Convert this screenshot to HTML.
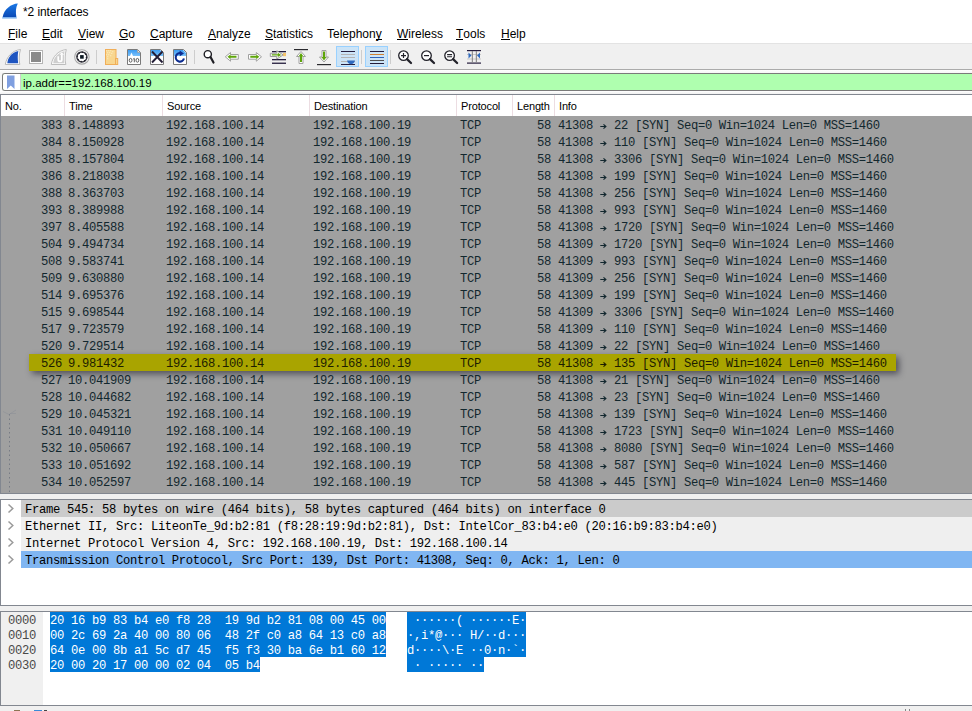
<!DOCTYPE html>
<html><head><meta charset="utf-8">
<style>
*{margin:0;padding:0;box-sizing:border-box}
html,body{width:972px;height:711px;overflow:hidden;background:#f0f0f0;font-family:"Liberation Sans",sans-serif;font-size:12px;color:#000;position:relative}
.abs{position:absolute}
#title{position:absolute;left:0;top:0;width:972px;height:22px;background:#fff}
#menu{position:absolute;left:0;top:22px;width:972px;height:22px;background:#fff}
.mi{position:absolute;top:5px;font-size:12px;line-height:14px;white-space:nowrap}
.mi u{text-decoration:none;position:relative}.mi u::after{content:"";position:absolute;left:0;right:0;top:12px;height:1px;background:#000}
#tb{position:absolute;left:0;top:43px;width:972px;height:27px;background:#f0f0f0;border-top:1px solid #e3e3e3;border-bottom:1px solid #ababab}
#tb svg{position:absolute}
#filter{position:absolute;left:2px;top:73px;width:970px;height:18px;border:1px solid #7a7a7a;border-right:none;border-radius:3px 0 0 3px;background:#afffaf;overflow:hidden}
#fbtn{position:absolute;left:0;top:0;width:18px;height:16px;background:#fff;border-right:1px solid #cfcfcf}
#pl{position:absolute;left:0;top:94px;width:972px;height:400px;border-top:1px solid #828790;border-left:1px solid #828790;border-bottom:1px solid #828790;background:#a0a0a0;overflow:hidden}
#hdr{position:absolute;left:0;top:0;width:971px;height:21px;background:#fff}
.hs{position:absolute;top:0;width:1px;height:21px;background:#ecdde2}
.ht{position:absolute;top:4px;font-size:11px;letter-spacing:-0.15px;line-height:14px}
.r{position:absolute;left:1px;width:971px;height:17px;color:#12272e;font-family:"Liberation Mono",monospace;font-size:12.2px;letter-spacing:-0.32px;line-height:17px;white-space:pre}
.r .c{position:absolute;top:2px}
.arw{vertical-align:-0.5px}
.hl{left:29px;width:867px;background:#a9a400;color:#1d1d00;box-shadow:3px 3px 6px rgba(30,30,45,0.6)}
.hl .c{margin-left:-28px}
#split1{position:absolute;left:0;top:494px;width:972px;height:5px;background:#f0f0f0}
#det{position:absolute;left:0;top:499px;width:972px;height:107px;border-top:1px solid #828790;border-left:1px solid #828790;border-bottom:1px solid #828790;background:#fff;overflow:hidden}
.dr{position:absolute;left:20px;width:952px;height:17px;font-family:"Liberation Mono",monospace;font-size:12.2px;letter-spacing:-0.32px;line-height:17px;white-space:pre;color:#000}
.dr span{position:absolute;left:4px;top:2px}
.chev{position:absolute;left:6px;top:0}
#bytes{position:absolute;left:0;top:611px;width:972px;height:95px;border-top:1px solid #828790;border-left:1px solid #828790;border-bottom:1px solid #828790;background:#fff;overflow:hidden}
#offcol{position:absolute;left:0;top:0;width:42px;height:100px;background:#f0f0f0}
.br{position:absolute;height:15px;font-family:"Liberation Mono",monospace;font-size:12.2px;letter-spacing:-0.32px;line-height:15px;white-space:pre}
.br span{position:absolute;left:0;top:2px}
.off{left:7px;color:#4a4a4a;padding-top:2px}
.sel{background:#0078d7;color:#fff}
#status{position:absolute;left:0;top:706px;width:972px;height:5px;background:#f0f0f0;overflow:hidden}
.mono-st{-webkit-text-stroke:0.2px currentColor}

#fbg{position:absolute;left:0;top:70px;width:972px;height:24px;background:linear-gradient(#fff 0,#f6f6f6 3px,#f6f6f6 20px,#fff 21px,#f0f0f0 24px)}

</style></head><body>
<div id="title">
 <svg class="abs" style="left:0;top:0" width="22" height="22" viewBox="0 0 22 22">
  <defs><linearGradient id="sg" x1="0" y1="0" x2="0" y2="1"><stop offset="0" stop-color="#1a78e6"/><stop offset="1" stop-color="#0b4ab6"/></linearGradient></defs>
  <path d="M17.8 3.6 C11 4 4.3 9 2.6 17.2 L16.4 17.2 C15.6 12.5 15.6 7.6 17.8 3.6Z" fill="url(#sg)"/>
  <path d="M2.4 17.2 H16.6 L16.9 18.6 H2.1Z" fill="#6aa8ee"/>
 </svg>
 <div class="abs" style="left:23px;top:5px;font-size:12px;letter-spacing:-0.1px;line-height:14px">*2 interfaces</div>
</div>
<div id="menu">
 <div class="mi" style="left:8px"><u>F</u>ile</div>
 <div class="mi" style="left:42px"><u>E</u>dit</div>
 <div class="mi" style="left:78px"><u>V</u>iew</div>
 <div class="mi" style="left:119px"><u>G</u>o</div>
 <div class="mi" style="left:150px"><u>C</u>apture</div>
 <div class="mi" style="left:208px"><u>A</u>nalyze</div>
 <div class="mi" style="left:265px"><u>S</u>tatistics</div>
 <div class="mi" style="left:327px">Telephon<u>y</u></div>
 <div class="mi" style="left:397px"><u>W</u>ireless</div>
 <div class="mi" style="left:456px"><u>T</u>ools</div>
 <div class="mi" style="left:501px"><u>H</u>elp</div>
</div>
<div id="tb"></div>
<svg style="left:0;top:0;position:absolute" width="500" height="70" viewBox="0 0 500 70">
 <!-- shark start -->
 <path d="M20.5 49.5 C12 50.5 6.5 57 5.3 64.5 L19.8 64.5 C18.8 60 19 54 20.5 49.5Z" fill="#fff" stroke="#b9b9b9" stroke-width="1"/>
 <path d="M18.3 51 C11.5 52.5 8 57.5 7.3 63.2 L18.2 63.2 C17.6 59 17.6 55 18.3 51Z" fill="#1f55c0"/>
 <!-- stop -->
 <rect x="29.5" y="50.5" width="13" height="13" fill="#fff" stroke="#b4b4b4"/>
 <rect x="31" y="52" width="10" height="10" fill="#8a8a8a"/>
 <!-- restart -->
 <path d="M66.3 49.5 C58 50.5 52.3 57 51.3 64.5 L65.8 64.5 C64.8 60 65 54 66.3 49.5Z" fill="#fdfdfd" stroke="#bdbdbd" stroke-width="1"/>
 <path d="M64.6 51.3 C58.5 52.5 54 57 53.2 63.2 L64.4 63.2 C63.8 59 63.9 55 64.6 51.3Z" fill="#cfcfcf"/>
 <path d="M58.2 56.2 V59.8 C58.2 62 61.8 62 61.8 59.8 V54.5" fill="none" stroke="#fff" stroke-width="1.7"/>
 <path d="M59.6 54.8 L61.8 52.2 L64 54.8Z" fill="#fff"/>
 <!-- gear -->
 <circle cx="81.9" cy="56.9" r="7.2" fill="#fff" stroke="#a9a9a9" stroke-width="1.1"/>
 <circle cx="81.9" cy="56.9" r="5.0" fill="#fff" stroke="#3a3a42" stroke-width="1.5"/>
 <g fill="#22222c">
  <circle cx="82.4" cy="52.3" r=".8"/><circle cx="85.6" cy="54.2" r=".8"/><circle cx="86.5" cy="57.6" r=".8"/><circle cx="84.6" cy="60.8" r=".8"/>
  <circle cx="81.2" cy="61.6" r=".8"/><circle cx="78.2" cy="59.5" r=".8"/><circle cx="77.3" cy="56.2" r=".8"/><circle cx="79.2" cy="53.1" r=".8"/>
 </g>
 <rect x="80.1" y="55.1" width="3.6" height="3.6" fill="#0c1822"/>
 <!-- separators -->
 <rect x="96" y="50" width="1" height="14" fill="#cdcdcd"/>
 <rect x="194" y="50" width="1" height="14" fill="#cdcdcd"/>
 <rect x="361" y="50" width="1" height="14" fill="#cdcdcd"/>
 <rect x="390" y="50" width="1" height="14" fill="#cdcdcd"/>
 <!-- open -->
 <rect x="105.5" y="49.5" width="10.5" height="15" fill="#f8d68e" stroke="#f0ae58"/>
 <rect x="115.5" y="58.5" width="2.2" height="6" fill="#f8d68e" stroke="#f0ae58"/>
 <g fill="#fff6d8"><circle cx="106.8" cy="50.8" r=".55"/><circle cx="108.8" cy="50.8" r=".55"/><circle cx="110.8" cy="50.8" r=".55"/><circle cx="112.8" cy="51.8" r=".55"/><circle cx="107.8" cy="52.8" r=".55"/><circle cx="109.8" cy="52.8" r=".55"/><circle cx="111.8" cy="53.3" r=".55"/><circle cx="106.8" cy="54.8" r=".55"/><circle cx="108.8" cy="54.8" r=".55"/><circle cx="110.8" cy="55.8" r=".55"/><circle cx="107.8" cy="56.8" r=".55"/><circle cx="107.8" cy="58.8" r=".55"/></g>
 <!-- save -->
 <defs><linearGradient id="bl" x1="0" y1="0" x2="0" y2="1"><stop offset="0" stop-color="#3b9af0"/><stop offset="1" stop-color="#7cc2fb"/></linearGradient></defs>
 <path d="M127.5 49.5H137.5L140.5 52.5V64.5H127.5Z" fill="#fff" stroke="#7a7a7a"/>
 <path d="M128 50H137L140 53V56H128Z" fill="url(#bl)"/>
 <path d="M130 56 L131.5 52.5 L133 56Z" fill="#fff"/>
 <path d="M137.5 50V52.5H140" fill="#e8e8e8" stroke="#9a9a9a" stroke-width=".7"/>
 <g fill="none" stroke="#5c5c5c" stroke-width="1"><ellipse cx="130.6" cy="60.3" rx="1.4" ry="1.9"/><path d="M133.2 59 L134.3 58.4 V62.3"/><ellipse cx="137.4" cy="60.3" rx="1.4" ry="1.9"/></g>
 <!-- close -->
 <path d="M150.5 49.5H160.5L163.5 52.5V64.5H150.5Z" fill="#fff" stroke="#7a7a7a"/>
 <path d="M151 50H160L163 53V56H151Z" fill="url(#bl)"/>
 <path d="M152 51.5L162.5 62.5M162.5 51.5L152 62.5" stroke="#231d36" stroke-width="1.9"/>
 <!-- reload -->
 <path d="M173.5 49.5H183.5L186.5 52.5V64.5H173.5Z" fill="#fff" stroke="#7a7a7a"/>
 <path d="M174 50H183L186 53V56H174Z" fill="url(#bl)"/>
 <path d="M184 58.5 A4.2 4.2 0 1 1 181 53.3" fill="none" stroke="#0c2c90" stroke-width="2.1"/>
 <path d="M179.6 50.6 L184 53.4 L179.8 56.2Z" fill="#0c2c90"/>
 <!-- find -->
 <circle cx="207.8" cy="54.2" r="3.6" fill="#fff" stroke="#1e1e24" stroke-width="1.4"/>
 <path d="M210.5 57 L213.5 62.5" stroke="#1e1e24" stroke-width="2.2" stroke-linecap="round"/>
 <!-- back -->
 <path d="M225.3 56.8 L230.5 52.5 V54.5 H238.3 V59.2 H230.5 V61.2Z" fill="#fff" stroke="#a0a0a0" stroke-width="1" stroke-linejoin="round"/>
 <path d="M227.5 56.8 L230.5 54.5 V55.8 H236.5 V57.8 H230.5 V59.2Z" fill="#5ea50a"/>
 <!-- fwd -->
 <path d="M261.5 56.8 L256.3 52.5 V54.5 H248.5 V59.2 H256.3 V61.2Z" fill="#fff" stroke="#a0a0a0" stroke-width="1" stroke-linejoin="round"/>
 <path d="M259.3 56.8 L256.3 54.5 V55.8 H250.3 V57.8 H256.3 V59.2Z" fill="#5ea50a"/>
 <!-- goto -->
 <rect x="272" y="51" width="14" height="1.3" fill="#241c3c"/>
 <rect x="272" y="59" width="14" height="1.3" fill="#241c3c"/>
 <rect x="272" y="62.6" width="14" height="1.3" fill="#241c3c"/>
 <rect x="283" y="53" width="3" height="3.2" fill="#f6c36a"/>
 <path d="M270.3 53.3 H276.8 V50.8 L283.2 54.9 L276.8 59 V56.5 H270.3Z" fill="#fff" stroke="#9a9a9a" stroke-width="1" stroke-linejoin="round"/>
 <path d="M271.8 54.2 H277.8 V52.8 L281.2 54.9 L277.8 57 V55.6 H271.8Z" fill="#5ea50a"/>
 <!-- first -->
 <rect x="294" y="49" width="14" height="1.2" fill="#2a2a2e"/>
 <path d="M301 51.5 L305.5 56.5 H303 V63.5 H299 V56.5 H296.5Z" fill="#fff" stroke="#a0a0a0" stroke-linejoin="round"/>
 <path d="M301 53 L303.5 56.5 H302 V62 H300 V56.5 H298.5Z" fill="#5ea50a"/>
 <!-- last -->
 <rect x="317" y="64" width="14" height="1.2" fill="#2a2a2e"/>
 <path d="M324 62 L328.5 57 H326 V50.5 H322 V57 H319.5Z" fill="#fff" stroke="#a0a0a0" stroke-linejoin="round"/>
 <path d="M324 60.5 L326.5 57 H325 V51.5 H323 V57 H321.5Z" fill="#5ea50a"/>
 <!-- autoscroll button -->
 <rect x="336.5" y="46.5" width="22" height="20" fill="#cce4f7" stroke="#99d1ff"/>
 <rect x="341" y="51" width="14" height="1" fill="#241c3c"/>
 <rect x="341" y="54" width="14" height="1" fill="#b4b4b4"/>
 <rect x="341" y="57" width="14" height="1" fill="#b4b4b4"/>
 <rect x="341" y="61" width="14" height="1" fill="#b4b4b4"/>
 <rect x="341" y="64" width="14" height="1" fill="#241c3c"/>
 <path d="M347 60.5 H355 C354.5 63 352.5 64.3 351 64.3 C349.5 64.3 347.5 63 347 60.5Z" fill="#2f6ac0"/>
 <!-- colorize button -->
 <rect x="365.5" y="46.5" width="22" height="20" fill="#cce4f7" stroke="#99d1ff"/>
 <rect x="370" y="51" width="14" height="1" fill="#241c3c"/>
 <rect x="370" y="54" width="14" height="1" fill="#d08030"/>
 <rect x="370" y="57" width="14" height="1" fill="#2f62b8"/>
 <rect x="370" y="60" width="14" height="1" fill="#505050"/>
 <rect x="370" y="63" width="14" height="1" fill="#241c3c"/>
 <!-- zoom in -->
 <circle cx="403.5" cy="55.6" r="4.8" fill="#fff" stroke="#22222a" stroke-width="1.3"/>
 <path d="M407 59.2 L411 63" stroke="#22222a" stroke-width="2.3" stroke-linecap="round"/>
 <path d="M401 55.6 H406 M403.5 53.1 V58.1" stroke="#22222a" stroke-width="1.2"/>
 <!-- zoom out -->
 <circle cx="426.5" cy="55.6" r="4.8" fill="#fff" stroke="#22222a" stroke-width="1.3"/>
 <path d="M430 59.2 L434 63" stroke="#22222a" stroke-width="2.3" stroke-linecap="round"/>
 <path d="M424 55.6 H429" stroke="#22222a" stroke-width="1.2"/>
 <!-- normal -->
 <circle cx="449.6" cy="55.6" r="4.8" fill="#fff" stroke="#22222a" stroke-width="1.3"/>
 <path d="M453.1 59.2 L457.1 63" stroke="#22222a" stroke-width="2.3" stroke-linecap="round"/>
 <path d="M447.1 54.6 H452.1 M447.1 56.8 H452.1" stroke="#22222a" stroke-width="1.1"/>
 <!-- resize -->
 <rect x="467" y="50" width="14" height="1.2" fill="#241c3c"/>
 <rect x="467" y="62.5" width="14" height="1.2" fill="#241c3c"/>
 <rect x="467" y="54" width="14" height="1" fill="#c8c8c8"/>
 <rect x="467" y="58.5" width="14" height="1" fill="#c8c8c8"/>
 <rect x="471.8" y="51" width="1.1" height="11.5" fill="#888"/>
 <rect x="475.8" y="51" width="1.1" height="11.5" fill="#888"/>
 <path d="M468.5 52.5 L471.5 55.5 L468.5 58.5Z" fill="#2f6ac0"/>
 <path d="M480 52.5 L477 55.5 L480 58.5Z" fill="#2f6ac0"/>
</svg>

<div id="fbg"></div>
<div id="filter"><div id="fbtn">
 <svg class="abs" style="left:3px;top:1px" width="10" height="15" viewBox="0 0 10 15"><path d="M1 0.5H8.5V14L4.75 10.5L1 14Z" fill="#7f9fe0"/></svg>
</div><div class="abs" style="left:20px;top:2px;font-size:11.5px;line-height:14px">ip.addr==192.168.100.19</div></div>
<div id="pl">
 <div id="hdr">
  <div class="ht" style="left:4px">No.</div>
  <div class="hs" style="left:63px"></div><div class="ht" style="left:68px">Time</div>
  <div class="hs" style="left:161px"></div><div class="ht" style="left:166px">Source</div>
  <div class="hs" style="left:308px"></div><div class="ht" style="left:313px">Destination</div>
  <div class="hs" style="left:455px"></div><div class="ht" style="left:460px">Protocol</div>
  <div class="hs" style="left:511px"></div><div class="ht" style="left:516px">Length</div>
  <div class="hs" style="left:553px"></div><div class="ht" style="left:558px">Info</div>
 </div>
</div>
<svg class="abs" style="left:0;top:405px" width="20" height="90" viewBox="0 0 20 90"><path d="M9.5 9V88" stroke="#737882" stroke-width="1" stroke-dasharray="1.5 3" opacity="0.9"/><path d="M3 6.5L9 9.5L16 5M10 8.5H16" stroke="#8a8e96" stroke-width="0.8" fill="none" opacity="0.6"/></svg>
<div class="r" style="top:116px"><span class="c" style="left:40px">383</span><span class="c" style="left:67px">8.148893</span><span class="c" style="left:165px">192.168.100.14</span><span class="c" style="left:312px">192.168.100.19</span><span class="c" style="left:459px">TCP</span><span class="c" style="left:536px">58</span><span class="c" style="left:557px">41308 <svg class="arw" width="7" height="7" viewBox="0 0 7 7"><path d="M0.3 3.5H5.8M3.5 1.3L5.9 3.5L3.5 5.7" fill="none" stroke="currentColor" stroke-width="1.15"/></svg> 22 [SYN] Seq=0 Win=1024 Len=0 MSS=1460</span></div>
<div class="r" style="top:133px"><span class="c" style="left:40px">384</span><span class="c" style="left:67px">8.150928</span><span class="c" style="left:165px">192.168.100.14</span><span class="c" style="left:312px">192.168.100.19</span><span class="c" style="left:459px">TCP</span><span class="c" style="left:536px">58</span><span class="c" style="left:557px">41308 <svg class="arw" width="7" height="7" viewBox="0 0 7 7"><path d="M0.3 3.5H5.8M3.5 1.3L5.9 3.5L3.5 5.7" fill="none" stroke="currentColor" stroke-width="1.15"/></svg> 110 [SYN] Seq=0 Win=1024 Len=0 MSS=1460</span></div>
<div class="r" style="top:150px"><span class="c" style="left:40px">385</span><span class="c" style="left:67px">8.157804</span><span class="c" style="left:165px">192.168.100.14</span><span class="c" style="left:312px">192.168.100.19</span><span class="c" style="left:459px">TCP</span><span class="c" style="left:536px">58</span><span class="c" style="left:557px">41308 <svg class="arw" width="7" height="7" viewBox="0 0 7 7"><path d="M0.3 3.5H5.8M3.5 1.3L5.9 3.5L3.5 5.7" fill="none" stroke="currentColor" stroke-width="1.15"/></svg> 3306 [SYN] Seq=0 Win=1024 Len=0 MSS=1460</span></div>
<div class="r" style="top:167px"><span class="c" style="left:40px">386</span><span class="c" style="left:67px">8.218038</span><span class="c" style="left:165px">192.168.100.14</span><span class="c" style="left:312px">192.168.100.19</span><span class="c" style="left:459px">TCP</span><span class="c" style="left:536px">58</span><span class="c" style="left:557px">41308 <svg class="arw" width="7" height="7" viewBox="0 0 7 7"><path d="M0.3 3.5H5.8M3.5 1.3L5.9 3.5L3.5 5.7" fill="none" stroke="currentColor" stroke-width="1.15"/></svg> 199 [SYN] Seq=0 Win=1024 Len=0 MSS=1460</span></div>
<div class="r" style="top:184px"><span class="c" style="left:40px">388</span><span class="c" style="left:67px">8.363703</span><span class="c" style="left:165px">192.168.100.14</span><span class="c" style="left:312px">192.168.100.19</span><span class="c" style="left:459px">TCP</span><span class="c" style="left:536px">58</span><span class="c" style="left:557px">41308 <svg class="arw" width="7" height="7" viewBox="0 0 7 7"><path d="M0.3 3.5H5.8M3.5 1.3L5.9 3.5L3.5 5.7" fill="none" stroke="currentColor" stroke-width="1.15"/></svg> 256 [SYN] Seq=0 Win=1024 Len=0 MSS=1460</span></div>
<div class="r" style="top:201px"><span class="c" style="left:40px">393</span><span class="c" style="left:67px">8.389988</span><span class="c" style="left:165px">192.168.100.14</span><span class="c" style="left:312px">192.168.100.19</span><span class="c" style="left:459px">TCP</span><span class="c" style="left:536px">58</span><span class="c" style="left:557px">41308 <svg class="arw" width="7" height="7" viewBox="0 0 7 7"><path d="M0.3 3.5H5.8M3.5 1.3L5.9 3.5L3.5 5.7" fill="none" stroke="currentColor" stroke-width="1.15"/></svg> 993 [SYN] Seq=0 Win=1024 Len=0 MSS=1460</span></div>
<div class="r" style="top:218px"><span class="c" style="left:40px">397</span><span class="c" style="left:67px">8.405588</span><span class="c" style="left:165px">192.168.100.14</span><span class="c" style="left:312px">192.168.100.19</span><span class="c" style="left:459px">TCP</span><span class="c" style="left:536px">58</span><span class="c" style="left:557px">41308 <svg class="arw" width="7" height="7" viewBox="0 0 7 7"><path d="M0.3 3.5H5.8M3.5 1.3L5.9 3.5L3.5 5.7" fill="none" stroke="currentColor" stroke-width="1.15"/></svg> 1720 [SYN] Seq=0 Win=1024 Len=0 MSS=1460</span></div>
<div class="r" style="top:235px"><span class="c" style="left:40px">504</span><span class="c" style="left:67px">9.494734</span><span class="c" style="left:165px">192.168.100.14</span><span class="c" style="left:312px">192.168.100.19</span><span class="c" style="left:459px">TCP</span><span class="c" style="left:536px">58</span><span class="c" style="left:557px">41309 <svg class="arw" width="7" height="7" viewBox="0 0 7 7"><path d="M0.3 3.5H5.8M3.5 1.3L5.9 3.5L3.5 5.7" fill="none" stroke="currentColor" stroke-width="1.15"/></svg> 1720 [SYN] Seq=0 Win=1024 Len=0 MSS=1460</span></div>
<div class="r" style="top:252px"><span class="c" style="left:40px">508</span><span class="c" style="left:67px">9.583741</span><span class="c" style="left:165px">192.168.100.14</span><span class="c" style="left:312px">192.168.100.19</span><span class="c" style="left:459px">TCP</span><span class="c" style="left:536px">58</span><span class="c" style="left:557px">41309 <svg class="arw" width="7" height="7" viewBox="0 0 7 7"><path d="M0.3 3.5H5.8M3.5 1.3L5.9 3.5L3.5 5.7" fill="none" stroke="currentColor" stroke-width="1.15"/></svg> 993 [SYN] Seq=0 Win=1024 Len=0 MSS=1460</span></div>
<div class="r" style="top:269px"><span class="c" style="left:40px">509</span><span class="c" style="left:67px">9.630880</span><span class="c" style="left:165px">192.168.100.14</span><span class="c" style="left:312px">192.168.100.19</span><span class="c" style="left:459px">TCP</span><span class="c" style="left:536px">58</span><span class="c" style="left:557px">41309 <svg class="arw" width="7" height="7" viewBox="0 0 7 7"><path d="M0.3 3.5H5.8M3.5 1.3L5.9 3.5L3.5 5.7" fill="none" stroke="currentColor" stroke-width="1.15"/></svg> 256 [SYN] Seq=0 Win=1024 Len=0 MSS=1460</span></div>
<div class="r" style="top:286px"><span class="c" style="left:40px">514</span><span class="c" style="left:67px">9.695376</span><span class="c" style="left:165px">192.168.100.14</span><span class="c" style="left:312px">192.168.100.19</span><span class="c" style="left:459px">TCP</span><span class="c" style="left:536px">58</span><span class="c" style="left:557px">41309 <svg class="arw" width="7" height="7" viewBox="0 0 7 7"><path d="M0.3 3.5H5.8M3.5 1.3L5.9 3.5L3.5 5.7" fill="none" stroke="currentColor" stroke-width="1.15"/></svg> 199 [SYN] Seq=0 Win=1024 Len=0 MSS=1460</span></div>
<div class="r" style="top:303px"><span class="c" style="left:40px">515</span><span class="c" style="left:67px">9.698544</span><span class="c" style="left:165px">192.168.100.14</span><span class="c" style="left:312px">192.168.100.19</span><span class="c" style="left:459px">TCP</span><span class="c" style="left:536px">58</span><span class="c" style="left:557px">41309 <svg class="arw" width="7" height="7" viewBox="0 0 7 7"><path d="M0.3 3.5H5.8M3.5 1.3L5.9 3.5L3.5 5.7" fill="none" stroke="currentColor" stroke-width="1.15"/></svg> 3306 [SYN] Seq=0 Win=1024 Len=0 MSS=1460</span></div>
<div class="r" style="top:320px"><span class="c" style="left:40px">517</span><span class="c" style="left:67px">9.723579</span><span class="c" style="left:165px">192.168.100.14</span><span class="c" style="left:312px">192.168.100.19</span><span class="c" style="left:459px">TCP</span><span class="c" style="left:536px">58</span><span class="c" style="left:557px">41309 <svg class="arw" width="7" height="7" viewBox="0 0 7 7"><path d="M0.3 3.5H5.8M3.5 1.3L5.9 3.5L3.5 5.7" fill="none" stroke="currentColor" stroke-width="1.15"/></svg> 110 [SYN] Seq=0 Win=1024 Len=0 MSS=1460</span></div>
<div class="r" style="top:337px"><span class="c" style="left:40px">520</span><span class="c" style="left:67px">9.729514</span><span class="c" style="left:165px">192.168.100.14</span><span class="c" style="left:312px">192.168.100.19</span><span class="c" style="left:459px">TCP</span><span class="c" style="left:536px">58</span><span class="c" style="left:557px">41309 <svg class="arw" width="7" height="7" viewBox="0 0 7 7"><path d="M0.3 3.5H5.8M3.5 1.3L5.9 3.5L3.5 5.7" fill="none" stroke="currentColor" stroke-width="1.15"/></svg> 22 [SYN] Seq=0 Win=1024 Len=0 MSS=1460</span></div>
<div class="r hl" style="top:354px"><span class="c" style="left:40px">526</span><span class="c" style="left:67px">9.981432</span><span class="c" style="left:165px">192.168.100.14</span><span class="c" style="left:312px">192.168.100.19</span><span class="c" style="left:459px">TCP</span><span class="c" style="left:536px">58</span><span class="c" style="left:557px">41308 <svg class="arw" width="7" height="7" viewBox="0 0 7 7"><path d="M0.3 3.5H5.8M3.5 1.3L5.9 3.5L3.5 5.7" fill="none" stroke="currentColor" stroke-width="1.15"/></svg> 135 [SYN] Seq=0 Win=1024 Len=0 MSS=1460</span></div>
<div class="r" style="top:371px"><span class="c" style="left:40px">527</span><span class="c" style="left:67px">10.041909</span><span class="c" style="left:165px">192.168.100.14</span><span class="c" style="left:312px">192.168.100.19</span><span class="c" style="left:459px">TCP</span><span class="c" style="left:536px">58</span><span class="c" style="left:557px">41308 <svg class="arw" width="7" height="7" viewBox="0 0 7 7"><path d="M0.3 3.5H5.8M3.5 1.3L5.9 3.5L3.5 5.7" fill="none" stroke="currentColor" stroke-width="1.15"/></svg> 21 [SYN] Seq=0 Win=1024 Len=0 MSS=1460</span></div>
<div class="r" style="top:388px"><span class="c" style="left:40px">528</span><span class="c" style="left:67px">10.044682</span><span class="c" style="left:165px">192.168.100.14</span><span class="c" style="left:312px">192.168.100.19</span><span class="c" style="left:459px">TCP</span><span class="c" style="left:536px">58</span><span class="c" style="left:557px">41308 <svg class="arw" width="7" height="7" viewBox="0 0 7 7"><path d="M0.3 3.5H5.8M3.5 1.3L5.9 3.5L3.5 5.7" fill="none" stroke="currentColor" stroke-width="1.15"/></svg> 23 [SYN] Seq=0 Win=1024 Len=0 MSS=1460</span></div>
<div class="r" style="top:405px"><span class="c" style="left:40px">529</span><span class="c" style="left:67px">10.045321</span><span class="c" style="left:165px">192.168.100.14</span><span class="c" style="left:312px">192.168.100.19</span><span class="c" style="left:459px">TCP</span><span class="c" style="left:536px">58</span><span class="c" style="left:557px">41308 <svg class="arw" width="7" height="7" viewBox="0 0 7 7"><path d="M0.3 3.5H5.8M3.5 1.3L5.9 3.5L3.5 5.7" fill="none" stroke="currentColor" stroke-width="1.15"/></svg> 139 [SYN] Seq=0 Win=1024 Len=0 MSS=1460</span></div>
<div class="r" style="top:422px"><span class="c" style="left:40px">531</span><span class="c" style="left:67px">10.049110</span><span class="c" style="left:165px">192.168.100.14</span><span class="c" style="left:312px">192.168.100.19</span><span class="c" style="left:459px">TCP</span><span class="c" style="left:536px">58</span><span class="c" style="left:557px">41308 <svg class="arw" width="7" height="7" viewBox="0 0 7 7"><path d="M0.3 3.5H5.8M3.5 1.3L5.9 3.5L3.5 5.7" fill="none" stroke="currentColor" stroke-width="1.15"/></svg> 1723 [SYN] Seq=0 Win=1024 Len=0 MSS=1460</span></div>
<div class="r" style="top:439px"><span class="c" style="left:40px">532</span><span class="c" style="left:67px">10.050667</span><span class="c" style="left:165px">192.168.100.14</span><span class="c" style="left:312px">192.168.100.19</span><span class="c" style="left:459px">TCP</span><span class="c" style="left:536px">58</span><span class="c" style="left:557px">41308 <svg class="arw" width="7" height="7" viewBox="0 0 7 7"><path d="M0.3 3.5H5.8M3.5 1.3L5.9 3.5L3.5 5.7" fill="none" stroke="currentColor" stroke-width="1.15"/></svg> 8080 [SYN] Seq=0 Win=1024 Len=0 MSS=1460</span></div>
<div class="r" style="top:456px"><span class="c" style="left:40px">533</span><span class="c" style="left:67px">10.051692</span><span class="c" style="left:165px">192.168.100.14</span><span class="c" style="left:312px">192.168.100.19</span><span class="c" style="left:459px">TCP</span><span class="c" style="left:536px">58</span><span class="c" style="left:557px">41308 <svg class="arw" width="7" height="7" viewBox="0 0 7 7"><path d="M0.3 3.5H5.8M3.5 1.3L5.9 3.5L3.5 5.7" fill="none" stroke="currentColor" stroke-width="1.15"/></svg> 587 [SYN] Seq=0 Win=1024 Len=0 MSS=1460</span></div>
<div class="r" style="top:473px"><span class="c" style="left:40px">534</span><span class="c" style="left:67px">10.052597</span><span class="c" style="left:165px">192.168.100.14</span><span class="c" style="left:312px">192.168.100.19</span><span class="c" style="left:459px">TCP</span><span class="c" style="left:536px">58</span><span class="c" style="left:557px">41308 <svg class="arw" width="7" height="7" viewBox="0 0 7 7"><path d="M0.3 3.5H5.8M3.5 1.3L5.9 3.5L3.5 5.7" fill="none" stroke="currentColor" stroke-width="1.15"/></svg> 445 [SYN] Seq=0 Win=1024 Len=0 MSS=1460</span></div>
<div id="split1"></div>
<div id="det">
<div class="dr" style="top:0px;background:#cbcbcb"><span>Frame 545: 58 bytes on wire (464 bits), 58 bytes captured (464 bits) on interface 0</span></div>
<div class="abs" style="left:0;top:0px;width:20px;height:17px"><svg class="chev" width="8" height="17" viewBox="0 0 8 17"><path d="M1.5 4.5L5.8 8.5L1.5 12.5" fill="none" stroke="#9a9a9a" stroke-width="1.5"/></svg></div>
<div class="dr" style="top:17px;background:#efefef"><span>Ethernet II, Src: LiteonTe_9d:b2:81 (f8:28:19:9d:b2:81), Dst: IntelCor_83:b4:e0 (20:16:b9:83:b4:e0)</span></div>
<div class="abs" style="left:0;top:17px;width:20px;height:17px"><svg class="chev" width="8" height="17" viewBox="0 0 8 17"><path d="M1.5 4.5L5.8 8.5L1.5 12.5" fill="none" stroke="#9a9a9a" stroke-width="1.5"/></svg></div>
<div class="dr" style="top:34px;background:#efefef"><span>Internet Protocol Version 4, Src: 192.168.100.19, Dst: 192.168.100.14</span></div>
<div class="abs" style="left:0;top:34px;width:20px;height:17px"><svg class="chev" width="8" height="17" viewBox="0 0 8 17"><path d="M1.5 4.5L5.8 8.5L1.5 12.5" fill="none" stroke="#9a9a9a" stroke-width="1.5"/></svg></div>
<div class="dr" style="top:51px;background:#80b6f2"><span>Transmission Control Protocol, Src Port: 139, Dst Port: 41308, Seq: 0, Ack: 1, Len: 0</span></div>
<div class="abs" style="left:0;top:51px;width:20px;height:17px"><svg class="chev" width="8" height="17" viewBox="0 0 8 17"><path d="M1.5 4.5L5.8 8.5L1.5 12.5" fill="none" stroke="#9a9a9a" stroke-width="1.5"/></svg></div>
</div>
<div id="bytes"><div id="offcol"></div>
<div class="br off" style="top:0px">0000</div>
<div class="br sel" style="top:0px;left:49px;width:336px"><span>20 16 b9 83 b4 e0 f8 28  19 9d b2 81 08 00 45 00</span></div>
<div class="br sel" style="top:0px;left:406px;width:119px"><span> ······( ······E·</span></div>
<div class="br off" style="top:15px">0010</div>
<div class="br sel" style="top:15px;left:49px;width:336px"><span>00 2c 69 2a 40 00 80 06  48 2f c0 a8 64 13 c0 a8</span></div>
<div class="br sel" style="top:15px;left:406px;width:119px"><span>·,i*@··· H/··d···</span></div>
<div class="br off" style="top:30px">0020</div>
<div class="br sel" style="top:30px;left:49px;width:336px"><span>64 0e 00 8b a1 5c d7 45  f5 f3 30 ba 6e b1 60 12</span></div>
<div class="br sel" style="top:30px;left:406px;width:119px"><span>d····\·E ··0·n·`·</span></div>
<div class="br off" style="top:45px">0030</div>
<div class="br sel" style="top:45px;left:49px;width:210px"><span>20 00 20 17 00 00 02 04  05 b4</span></div>
<div class="br sel" style="top:45px;left:406px;width:77px"><span> · ····· ··</span></div>
</div>
<div id="status">
 <div class="abs" style="left:14px;top:4px;width:6px;height:3px;background:#8d7555"></div>
 <div class="abs" style="left:34px;top:4px;width:8px;height:3px;background:#3a8ad8"></div>
 <div class="abs" style="left:44px;top:4px;width:3px;height:3px;background:#444"></div>
 <div class="abs" style="left:905px;top:3px;width:1px;height:3px;background:#888"></div>
 <div class="abs" style="left:909px;top:3px;width:1px;height:3px;background:#888"></div>
</div>
</body></html>
